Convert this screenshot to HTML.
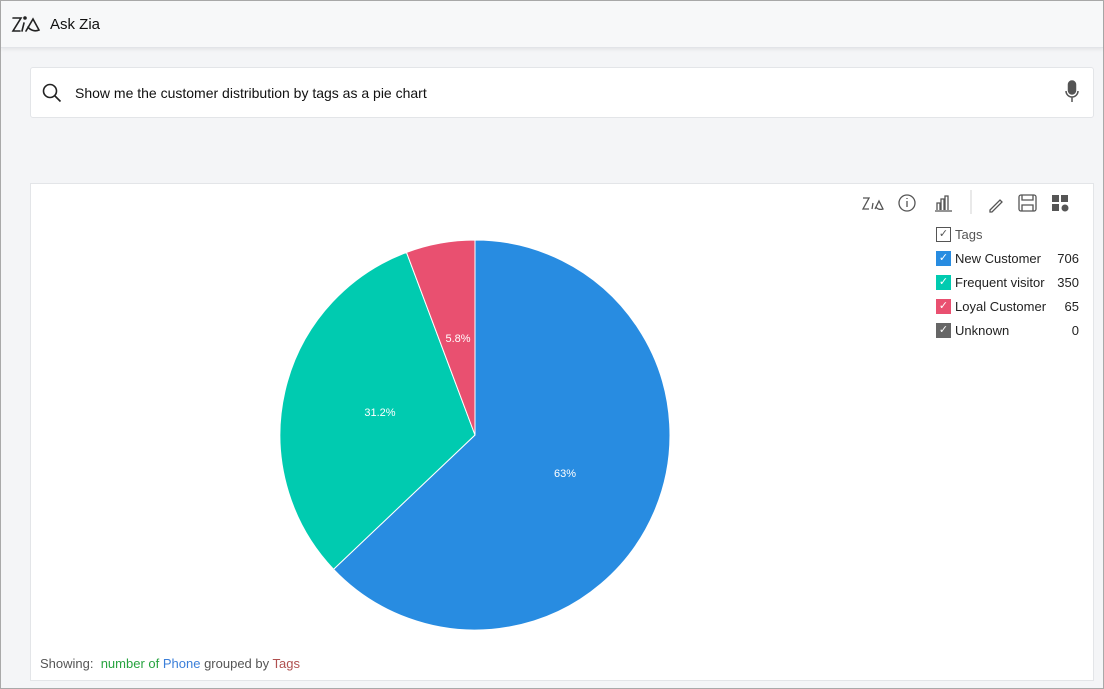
<!DOCTYPE html>
<html><head><style>
body{margin:0;width:1104px;height:689px;overflow:hidden;font-family:"Liberation Sans",sans-serif;background:#f4f5f7;position:relative}
.frame{position:absolute;left:0;top:0;width:1102px;height:687px;border:1px solid #a9a9a9;}
.hdr{position:absolute;left:1px;top:1px;width:1102px;height:46px;background:#f7f8f9;border-bottom:1px solid #e2e4e8;box-shadow:0 2px 3px rgba(0,0,0,.06)}
.search{position:absolute;left:30px;top:67px;width:1062px;height:49px;background:#fff;border:1px solid #e3e5e8;border-radius:3px}
.panel{position:absolute;left:30px;top:183px;width:1062px;height:496px;background:#fff;border:1px solid #e3e5e8}
.lg{position:absolute;left:936px;font-size:13px;color:#222;width:143px;height:16px;display:flex;align-items:center}
.lg .b{display:inline-block;flex:none;width:15px;height:15px;color:#fff;font-size:11px;text-align:center;line-height:15px;margin-right:4px}
.lg .n{position:absolute;right:0}
</style></head><body>
<div class="frame"></div>
<div class="hdr">
<svg style="position:absolute;left:10px;top:13px" width="30" height="20" viewBox="0 0 30 20" fill="none" stroke="#222" stroke-width="1.6" stroke-linecap="round"><path d="M2 4h8L2 17h7"/><path d="M13 9l-2 8"/><circle cx="14" cy="4" r="1" fill="#222"/><path d="M15 17l7-12 6 11c-4 2-9 0-11-3"/></svg>
<div style="position:absolute;left:49px;top:15px;font-size:15px;color:#111">Ask Zia</div>
</div>
<div class="search">
<svg style="position:absolute;left:11px;top:15px" width="20" height="20" viewBox="0 0 20 20" fill="none" stroke="#222" stroke-width="1.6"><circle cx="8" cy="8" r="6.5"/><path d="M13 13l5.5 5.5"/></svg>
<div style="position:absolute;left:44px;top:17px;font-size:14px;color:#111">Show me the customer distribution by tags as a pie chart</div>
<svg style="position:absolute;left:1033px;top:12px" width="16" height="24" viewBox="0 0 16 24" fill="none" stroke="#555" stroke-width="1.5"><rect x="4.5" y="1" width="7" height="13" rx="3.5" fill="#555"/><path d="M2 11a6 6 0 0012 0M8 17v5"/></svg>
</div>
<div class="panel"></div>
<svg style="position:absolute;left:0;top:0" width="1104" height="689">
<path d="M475 435 L475 240 A195 195 0 1 1 333.6 569.3 Z" fill="#288ce1" stroke="#fff" stroke-width="1"/>
<path d="M475 435 L333.6 569.3 A195 195 0 0 1 406.5 252.4 Z" fill="#00cbb0" stroke="#fff" stroke-width="1"/>
<path d="M475 435 L406.5 252.4 A195 195 0 0 1 475 240 Z" fill="#e95070" stroke="#fff" stroke-width="1"/>
<g font-family="Liberation Sans" font-size="11" fill="#fff" text-anchor="middle"><text x="565" y="477">63%</text><text x="380" y="416">31.2%</text><text x="458" y="342">5.8%</text></g>
<g fill="none" stroke="#555" stroke-width="1.3">
<path d="M863 198h6l-6 11h6M873 203l-1 6M875 209l4-8 4 8c-3 1-6 0-7-2"/>
<circle cx="907" cy="203" r="8"/><path d="M907 201v6M907 198v1"/>
<path d="M935 211h17M937 210v-7h3v7M941 210v-11h3v11M945 210v-14h3v14"/>
<path d="M971 190v24" stroke="#ddd"/>
<path d="M990 210l10-10 2 2-10 10h-2z"/>
<rect x="1019" y="195" width="17" height="16" rx="2"/><path d="M1022 195v5h11v-5M1022 211v-6h11v6"/>
</g>
<g fill="#555"><rect x="1052" y="195" width="7" height="7"/><rect x="1061" y="195" width="7" height="7"/><rect x="1052" y="204" width="7" height="7"/><circle cx="1065" cy="208" r="3.5"/></g>
</svg>
<div class="lg" style="top:226px;color:#555"><span class="b" style="border:1px solid #555;color:#555;width:13px;height:13px;line-height:13px">✓</span>Tags</div>
<div class="lg" style="top:250px"><span class="b" style="background:#288ce1">✓</span>New Customer<span class="n">706</span></div>
<div class="lg" style="top:274px"><span class="b" style="background:#00cbb0">✓</span>Frequent visitor<span class="n">350</span></div>
<div class="lg" style="top:298px"><span class="b" style="background:#e95070">✓</span>Loyal Customer<span class="n">65</span></div>
<div class="lg" style="top:322px"><span class="b" style="background:#666">✓</span>Unknown<span class="n">0</span></div>
<div style="position:absolute;left:40px;top:656px;font-size:13px;color:#555">Showing: &nbsp;<span style="color:#27a33f">number of</span> <span style="color:#3b7fd9">Phone</span> grouped by <span style="color:#b0504f">Tags</span></div>
</body></html>
